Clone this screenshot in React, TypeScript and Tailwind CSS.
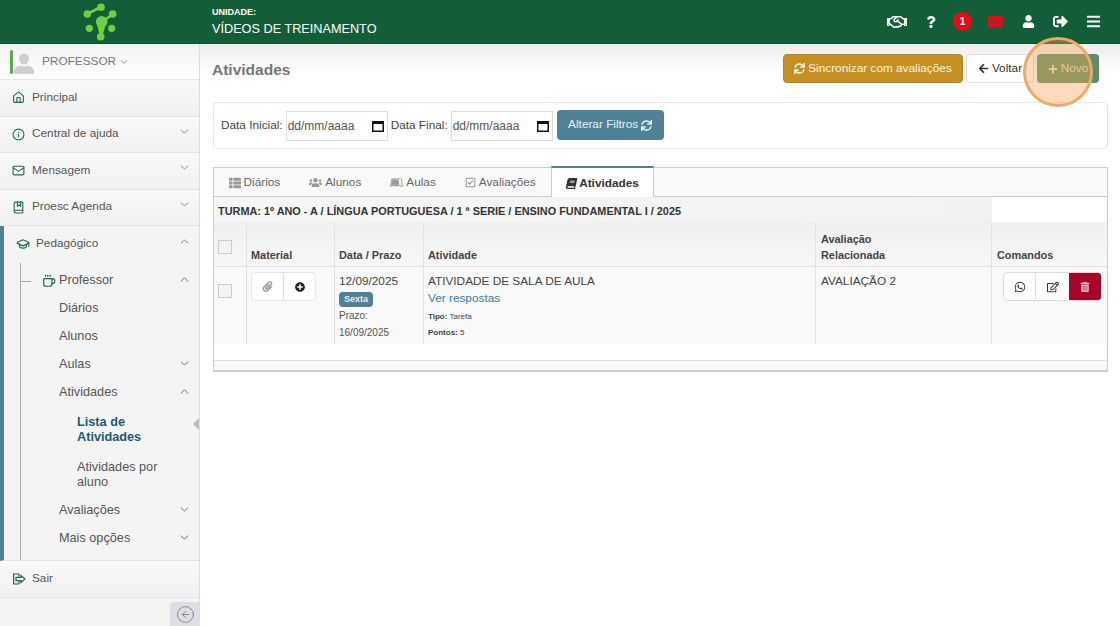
import { ChevronDown, ChevronUp, House, Info, Mail, BookMarked, GraduationCap, Coffee, CircleArrowLeft } from "lucide-react";
import {
  FaBars,
  FaBook,
  FaEnvelope,
  FaLeanpub,
  FaThList,
  FaPaperclip,
  FaPlus,
  FaPlusCircle,
  FaQuestion,
  FaSignOutAlt,
  FaSync,
  FaTrashAlt,
  FaUser,
  FaUsers,
  FaArrowLeft,
  FaRegHandshake,
  FaWhatsapp,
  FaRegEdit,
  FaRegCheckSquare,
} from "react-icons/fa";

function SairIcon() {
  return (
    <svg width="14" height="12" viewBox="0 0 14 12" fill="none" stroke="currentColor" strokeWidth="1.2">
      <path d="M7 1H1.6v10H7M7 1v2.6M7 11V8.4M4 4.4h5V2.6L13 6l-4 3.4V7.6H4z" />
    </svg>
  );
}

function MenuRow({ icon, label, chevron }: { icon: React.ReactNode; label: string; chevron?: "up" | "down" }) {
  return (
    <div className="h-[36.5px] flex items-center pl-3 pr-[8px] border-b border-[#e4e4e4] bg-gradient-to-b from-[#f9f9f9] to-[#f1f1f1] text-[11.8px] text-[#555]">
      <span className="w-[20px] flex text-[#1f6a48]">{icon}</span>
      <span className="flex-1">{label}</span>
      {chevron === "down" && <ChevronDown size={13} strokeWidth={1.5} className="text-[#777] -mt-1.5" />}
      {chevron === "up" && <ChevronUp size={13} strokeWidth={1.5} className="text-[#777] -mt-1.5" />}
    </div>
  );
}

function SubRow({ label, chevron, className }: { label: string; chevron?: "up" | "down"; className?: string }) {
  return (
    <div className={`h-[28px] flex items-center pl-[59px] pr-[8px] text-[12.7px] text-[#555] ${className ?? ""}`}>
      <span className="flex-1">{label}</span>
      {chevron === "down" && <ChevronDown size={13} strokeWidth={1.5} className="text-[#555] -mt-1" />}
      {chevron === "up" && <ChevronUp size={13} strokeWidth={1.5} className="text-[#555] -mt-1" />}
    </div>
  );
}

function Tab({ icon, label, active }: { icon: React.ReactNode; label: string; active?: boolean }) {
  if (active) {
    return (
      <div className="h-[31px] -mt-px ml-px px-[14px] pt-[2px] flex items-center gap-[2px] bg-white border-x border-[#ccc] border-t-2 border-t-[#4f8297] text-[11.8px] font-bold text-[#333] relative z-10 -mb-px">
        {icon}
        {label}
      </div>
    );
  }
  return (
    <div className="h-[29px] px-[14.500px] pt-[2px] flex items-center gap-[3px] text-[11.8px] text-[#666]">
      <span className="text-[#999]">{icon}</span>
      {label}
    </div>
  );
}

function Logo() {
  return (
    <svg width="60" height="44" viewBox="0 0 60 44" className="text-[#6fd13f]">
      <g stroke="currentColor" strokeWidth="2.6" fill="none">
        <path d="M31 7 L17 14" />
        <path d="M43 14 L32 22" />
      </g>
      <path d="M27 24 L36 24 L32 37 L30 37 Z" fill="currentColor" />
      <g fill="currentColor">
        <circle cx="31" cy="7.3" r="3.8" />
        <circle cx="17.3" cy="14" r="3.8" />
        <circle cx="42.7" cy="14" r="3.8" />
        <circle cx="19.3" cy="28.3" r="3.6" />
        <circle cx="41.7" cy="28.3" r="3.6" />
        <circle cx="30.7" cy="36.7" r="3.8" />
        <circle cx="31.7" cy="21.7" r="5.8" />
      </g>
    </svg>
  );
}

function Sidebar() {
  return (
    <aside className="w-[200px] shrink-0 border-r border-[#ddd] bg-[#f4f4f4] flex flex-col relative">
      <div className="h-[36px] bg-gradient-to-b from-[#f2f2f2] to-white border-b border-[#e8e8e8] flex items-center pl-[10px] text-[11.8px] text-[#777]">
        <span className="w-[3px] h-[24px] rounded-sm bg-[#5aab4e]" />
        <svg width="20" height="21" viewBox="0 0 20 21" className="ml-px mt-[3px] text-[#cfcfcf]" fill="currentColor">
          <ellipse cx="10" cy="6" rx="5" ry="5.6" />
          <path d="M0 21v-3.5c0-2.600 4-4.500 6.500-5 1 1 6 1 7 0 2.500.500 6.500 2.400 6.500 5V21z" />
        </svg>
        <span className="ml-[8px]">PROFESSOR</span>
        <ChevronDown size={12} strokeWidth={1.5} className="ml-0.5" />
      </div>
      <MenuRow icon={<House size={13} />} label="Principal" />
      <MenuRow icon={<Info size={13} />} label="Central de ajuda" chevron="down" />
      <MenuRow icon={<Mail size={13} />} label="Mensagem" chevron="down" />
      <MenuRow icon={<BookMarked size={13} />} label="Proesc Agenda" chevron="down" />
      <div className="border-l-4 border-[#4f8297] h-[335px] border-b border-b-[#e4e4e4] relative">
        <div className="h-[36px] flex items-center pl-3 pr-[8px] text-[11.8px] text-[#555]">
          <span className="w-[20px] flex text-[#1f6a48]">
            <GraduationCap size={14} />
          </span>
          <span className="flex-1">Pedagógico</span>
          <ChevronUp size={13} strokeWidth={1.5} className="text-[#777] -mt-1.5" />
        </div>
        <span className="absolute left-[16px] top-[37px] bottom-0 w-px bg-[#aaa]" />
        <span className="absolute left-[16px] top-[55px] w-[11px] h-px bg-[#aaa]" />
        <div className="h-[28px] mt-[5px] flex items-center pl-[38px] pr-[8px] text-[12.7px] text-[#555]">
          <span className="w-[17px] flex text-[#1f6a48]">
            <Coffee size={14} />
          </span>
          <span className="flex-1">Professor</span>
          <ChevronUp size={13} strokeWidth={1.5} className="-mt-1" />
        </div>
        <div className="-ml-1">
          <SubRow label="Diários" />
          <SubRow label="Alunos" />
          <SubRow label="Aulas" chevron="down" />
          <SubRow label="Atividades" chevron="up" />
          <div className="pl-[77px] pr-3 pt-[8px] text-[12.7px] leading-[15px]">
            <p className="font-bold text-[#1c5a74] h-[30px]">
              Lista de
              <br />
              Atividades
            </p>
            <p className="mt-[15px] text-[#555] h-[30px]">
              Atividades por
              <br />
              aluno
            </p>
          </div>
          <SubRow label="Avaliações" chevron="down" className="mt-[7px]" />
          <SubRow label="Mais opções" chevron="down" />
        </div>
        <span className="absolute right-0 top-[192px] border-y-[6px] border-y-transparent border-r-[6px] border-r-[#bbb]" />
      </div>
      <MenuRow icon={<SairIcon />} label="Sair" />
      <div className="flex-1 flex justify-end items-end">
        <div className="w-[29px] h-[24px] pl-px bg-[#dcdfe4] rounded-tl flex items-center justify-center text-[#888]">
          <CircleArrowLeft size={19} strokeWidth={1.25} />
        </div>
      </div>
    </aside>
  );
}

export default function App() {
  return (
    <div className="w-[1120px] h-[626px] overflow-hidden bg-white flex flex-col [font-family:'Liberation_Sans',Arial,sans-serif]">
      <header className="h-[44px] shrink-0 bg-[#135e38] flex items-center text-white border-b border-[#0f4f2f]">
        <div className="w-[200px] flex justify-center">
          <Logo />
        </div>
        <div className="pl-[12px] pt-[2px] flex-1">
          <p className="text-[9px] font-bold leading-[12px]">UNIDADE:</p>
          <p className="text-[12.7px] leading-[20px] mt-[1px]">VÍDEOS DE TREINAMENTO</p>
        </div>
        <div className="flex items-center pr-[19px] relative">
          <FaRegHandshake size={20} className="mr-[18px]" />
          <FaQuestion size={12} className="mr-[16px]" />
          <span className="w-[19px] h-[19px] rounded-full bg-[#ea0a17] text-[10px] font-bold flex items-center justify-center mr-[16px]">1</span>
          <FaEnvelope size={15} className="text-[#ea0a17] mr-[19px]" />
          <FaUser size={13} className="mr-[18px]" />
          <FaSignOutAlt size={15} className="mr-[18px]" />
          <FaBars size={15} />
        </div>
      </header>
      <div className="flex-1 flex min-h-0">
        <Sidebar />
        <main className="flex-1 min-w-0 relative pl-[13px] pr-[12px]">
          <div className="absolute inset-x-0 top-0 h-[30px] bg-gradient-to-b from-[#eee] to-white" />
          <div className="relative h-[58px] flex items-start -ml-px">
            <h1 className="text-[15.5px] font-bold text-[#777] mt-[14px] flex-1">Atividades</h1>
            <div className="flex items-center gap-[3px] mt-[10px] mr-[9px] text-[11.8px]">
              <div className="h-[29px] w-[180px] justify-center rounded-sm bg-[#c49022] border border-[#b5851c] text-[#fff6e0] flex items-center gap-[3px]">
                <FaSync size={11} />
                Sincronizar com avaliações
              </div>
              <div className="h-[29px] w-[68px] justify-center rounded-sm bg-white border border-[#ddd] text-[#333] flex items-center gap-[3px]">
                <FaArrowLeft size={11} />
                Voltar
              </div>
              <div className="h-[29px] w-[62px] justify-center rounded-sm bg-[#5a8f62] text-[#e4dfc4] flex items-center gap-[3px]">
                <FaPlus size={10} />
                Novo
              </div>
            </div>
          </div>
          {/* destaque do tutorial por cima do botão Novo */}
          <span className="absolute left-[823px] top-[-7px] w-[70px] h-[70px] rounded-full bg-[#f5a35c]/40 border-[3px] border-[#efa868] z-10" />
          <section className="relative h-[47px] border border-[#e7e7e7] rounded-sm flex items-center pl-[7px] text-[11.8px] text-[#444]">
            <span>Data Inicial:</span>
            <div className="ml-[3px] w-[102px] h-[30px] border border-[#ddd] flex items-center justify-between pl-[1px] pr-[1px] text-[12px] text-[#555]">
              dd/mm/aaaa
              <Cal />
            </div>
            <span className="ml-[3px]">Data Final:</span>
            <div className="ml-[3px] w-[102px] h-[30px] border border-[#ddd] flex items-center justify-between pl-[1px] pr-[1px] text-[12px] text-[#555]">
              dd/mm/aaaa
              <Cal />
            </div>
            <div className="ml-[4px] -mt-px w-[107px] h-[30px] bg-[#4f8297] rounded-sm text-[#e8f0f3] flex items-center justify-center gap-[3px]">
              Alterar Filtros <FaSync size={11} />
            </div>
          </section>
          <section className="relative mt-[18px] h-[205px] border border-[#ccc] border-b-2 flex flex-col">
            <div className="h-[29px] bg-[#f9f9f9] border-b border-[#ccc] flex items-end shrink-0">
              <Tab icon={<FaThList size={12} />} label="Diários" />
              <Tab icon={<FaUsers size={13} />} label="Alunos" />
              <Tab icon={<FaLeanpub size={13} />} label="Aulas" />
              <Tab icon={<FaRegCheckSquare size={11} />} label="Avaliações" />
              <Tab icon={<FaBook size={11} className="-skew-x-12" />} label="Atividades" active />
            </div>
            <div className="h-[25px] w-[778px] pt-[3px] shrink-0 bg-gradient-to-r from-[#f6f6f6] to-[#f2f2f2] flex items-center pl-1 text-[10.9px] font-bold text-[#333]">
              TURMA: 1º ANO - A / LÍNGUA PORTUGUESA / 1 ª SERIE / ENSINO FUNDAMENTAL I / 2025
            </div>
            <div className="grid grid-cols-[33px_88px_89px_392px_176px_1fr] shrink-0 text-[10.9px] leading-[16px] font-bold text-[#444] h-[45px] border-b border-[#e2e2e2] bg-gradient-to-b from-[#f0f0f0] to-[#f7f7f7]">
              <div className="border-r border-[#e2e2e2] pt-[18px] pl-1">
                <Check />
              </div>
              <div className="border-r border-[#e2e2e2] flex items-end pb-[3px] pl-1">Material</div>
              <div className="border-r border-[#e2e2e2] flex items-end pb-[3px] pl-1">Data / Prazo</div>
              <div className="border-r border-[#e2e2e2] flex items-end pb-[3px] pl-1">Atividade</div>
              <div className="border-r border-[#e2e2e2] pb-[3px] pl-[5px] pt-[9px]">
                Avaliação
                <br />
                Relacionada
              </div>
              <div className="flex items-end pb-[3px] pl-[5px]">Comandos</div>
            </div>
            <div className="grid grid-cols-[33px_88px_89px_392px_176px_1fr] shrink-0 h-[77px] bg-[#f9f9f9] text-[11.8px] text-[#444]">
              <div className="border-r border-[#e2e2e2] pt-[17px] pl-1">
                <Check />
              </div>
              <div className="border-r border-[#e2e2e2] pt-[5px] pl-1">
                <div className="w-[65px] h-[29px] border border-[#e6e6e6] bg-white rounded-sm flex">
                  <span className="flex-1 flex items-center justify-center text-[#999] border-r border-[#ddd]">
                    <FaPaperclip size={11} />
                  </span>
                  <span className="flex-1 flex items-center justify-center text-[#222]">
                    <FaPlusCircle size={10} />
                  </span>
                </div>
              </div>
              <div className="border-r border-[#e2e2e2] pl-1 pt-[6px]">
                <p className="leading-[16px]">12/09/2025</p>
                <span className="inline-block mt-[3px] -mb-[2px] h-[15px] px-[5px] rounded-sm bg-[#4f8297] text-[9px] font-bold text-[#e8f0f3] leading-[15px] align-top">Sexta</span>
                <p className="text-[10px] leading-[17px] text-[#555]">Prazo:</p>
                <p className="text-[10px] leading-[17px] text-[#555]">16/09/2025</p>
              </div>
              <div className="border-r border-[#e2e2e2] pl-1 pt-[6px]">
                <p className="leading-[16px]">ATIVIDADE DE SALA DE AULA</p>
                <p className="leading-[17px] mt-px text-[#3a7ca5]">Ver respostas</p>
                <p className="text-[8px] leading-[16px] mt-[2px]">
                  <b>Tipo:</b> Tarefa
                </p>
                <p className="text-[8px] leading-[16px]">
                  <b>Pontos:</b> 5
                </p>
              </div>
              <div className="border-r border-[#e2e2e2] pl-[5px] pt-[6px] leading-[16px]">AVALIAÇÃO 2</div>
              <div className="pt-[5px] pl-[11px]">
                <div className="w-[99px] h-[29px] border border-[#ddd] bg-white rounded-sm flex overflow-hidden">
                  <span className="w-[32px] flex items-center justify-center text-[#333] border-r border-[#ddd]">
                    <FaWhatsapp size={12} />
                  </span>
                  <span className="w-[33px] flex items-center justify-center text-[#333]">
                    <FaRegEdit size={12} />
                  </span>
                  <span className="flex-1 flex items-center justify-center bg-[#a90329] text-[#f5b8c6]">
                    <FaTrashAlt size={10} />
                  </span>
                </div>
              </div>
            </div>
            <div className="h-[17px] shrink-0 border-b border-[#ddd]" />
            <div className="flex-1 bg-[#f9f9f9]" />
          </section>
        </main>
      </div>
    </div>
  );
}

function Cal() {
  return (
    <svg width="14" height="14" viewBox="0 0 14 14" className="shrink-0 mr-[1px]">
      <rect x="1" y="2" width="12" height="11" fill="#111" />
      <rect x="2.500" y="5" width="9" height="6.500" fill="#fff" />
    </svg>
  );
}

function Check() {
  return <span className="block w-[14px] h-[14px] border border-[#ccc] bg-[#f3f3f3]" />;
}
